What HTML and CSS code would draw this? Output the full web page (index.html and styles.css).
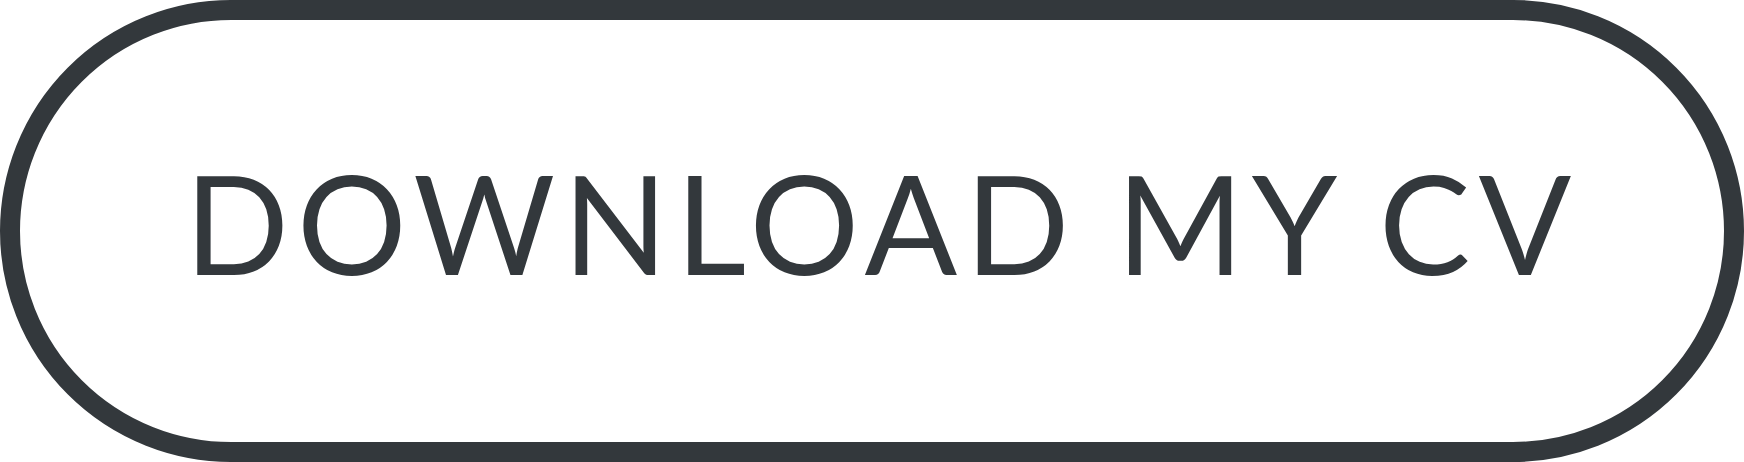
FILE: index.html
```html
<!DOCTYPE html>
<html lang="en">
<head>
<meta charset="utf-8">
<title>Download my CV</title>
<link rel="stylesheet" href="styles.css">
</head>
<body>
<a class="cv-button" href="#"><span class="cv-label">DOWNLOAD MY CV</span></a>
</body>
</html>
```
FILE: styles.css
```css
html, body {
  margin: 0;
  padding: 0;
  background: #ffffff;
}
.cv-button {
  box-sizing: border-box;
  display: flex;
  align-items: center;
  justify-content: center;
  width: 1744px;
  height: 462px;
  border: 20px solid #33383c;
  border-radius: 231px;
  background: #ffffff;
  color: #33383c;
  text-decoration: none;
  padding-bottom: 18px;
  padding-left: 20px;
}
.cv-label {
  font-family: "Lato", "Open Sans", sans-serif;
  font-weight: 400;
  font-size: 137px;
  line-height: 1;
  letter-spacing: 8px;
  word-spacing: -4px;
  white-space: nowrap;
}
```
